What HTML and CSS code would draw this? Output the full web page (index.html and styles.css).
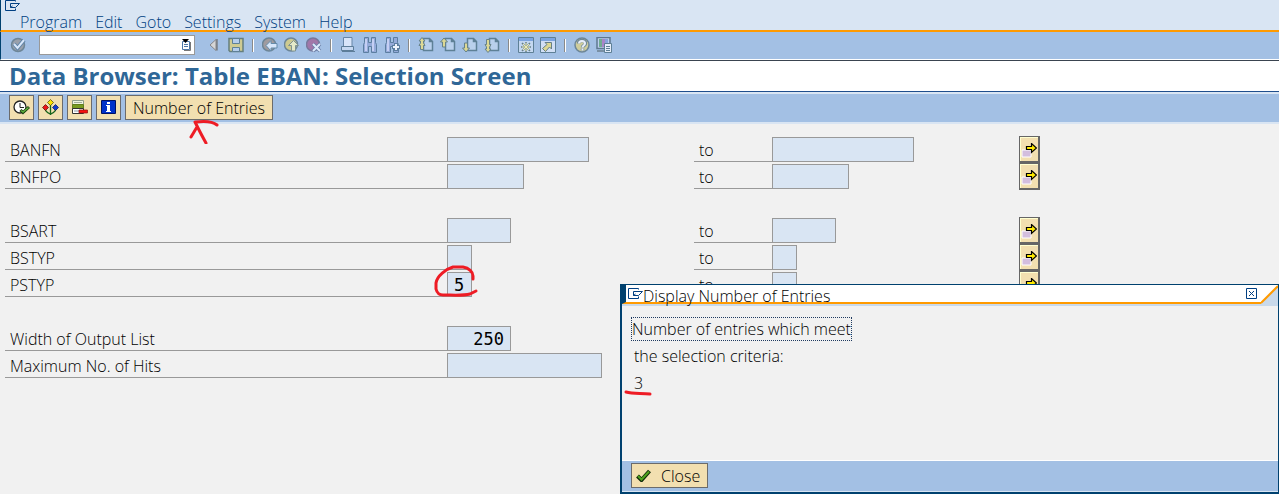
FILE: index.html
```
<!DOCTYPE html>
<html lang="en">
<head>
    <meta charset="UTF-8">
    <title>Data Browser: Table EBAN: Selection Screen</title>
    <link rel="stylesheet" href="styles.css">
</head>
<body>

    <!-- Shared icons -->
    <svg class="sprite" aria-hidden="true">
        <symbol id="i-session" viewBox="0 0 15 11">
            <path d="M10.500 1.500V.5h-10v10h10V8.500M14.500 3.500h-9v4h5zM5.500 7.500l2-1.500" fill="none" stroke="#003f82"/>
        </symbol>
        <symbol id="i-page" viewBox="0 0 16 16">
            <path d="M5.500 1.500h6l3 3v9h-9zM11.500 1.500v3h3" fill="#b9d0ec" stroke="#5e8096" stroke-width="1.500"/>
        </symbol>
        <symbol id="i-more" viewBox="0 0 16 16">
            <path d="M1 7h9v7H1z" fill="#d3bede" stroke="#fff"/>
            <path d="M6 5h4V3h1v1" fill="#9badd0"/>
            <path d="M5.500 3.500h5v-3l5 4.500-5 4.500v-3h-5z" fill="#ffea00" stroke="#000" stroke-width="1.200"/>
        </symbol>
    </svg>

    <!-- Menu -->
    <header class="menubar">
        <svg class="session" width="15" height="11"><use href="#i-session"/></svg>
        <nav class="menu">
            <a href="#">Program</a>
            <a href="#">Edit</a>
            <a href="#">Goto</a>
            <a href="#">Settings</a>
            <a href="#">System</a>
            <a href="#">Help</a>
        </nav>
    </header>

    <!-- Standard toolbar -->
    <div class="toolbar">
        <button type="button" class="tool" aria-label="Enter">
            <svg viewBox="0 0 16 16"><circle cx="8" cy="8" r="6.500" fill="#99a0ab" stroke="#6d8698" stroke-width="1.500"/><path d="M4 7l3.500 4L14 3" fill="none" stroke="#5f84a8" stroke-width="4"/><path d="M4 7l3.500 4L14 3" fill="none" stroke="#d8e7fa" stroke-width="2"/></svg>
        </button>
        <div class="command">
            <input type="text" aria-label="Command">
            <svg width="11" height="12" viewBox="0 0 11 12"><path d="M1.500 2.500h7v8h-7z" fill="#fff" stroke="#4d77a8"/><path d="M3 5.500h4M3 7.500h4" stroke="#4d77a8"/><path d="M9.500 3v8.500H3" fill="none" stroke="#777"/><path d="M1 0h7L4.500 4z" fill="#000"/></svg>
        </div>
        <button type="button" class="tool narrow" aria-label="Close field">
            <svg viewBox="0 0 9 16"><path d="M7 2.500v11L1 8z" fill="#d6d6d6" stroke="#85868a"/><path d="M8 2v11.500" stroke="#655f59"/></svg>
        </button>
        <button type="button" class="tool" aria-label="Save">
            <svg viewBox="0 0 16 16"><path d="M1 1.500h14v13H2l-1-1z" fill="#cfcb92" stroke="#667f7d" stroke-width="1.500"/><path d="M4.500 1.500h7v5h-7zM4.500 10.500h7v4h-7z" fill="#b5cdec" stroke="#5e8096"/></svg>
        </button>
        <span class="sep"></span>
        <button type="button" class="tool" aria-label="Back">
            <svg viewBox="0 0 16 16"><circle cx="7" cy="7.500" r="6.500" fill="#a09b9f" stroke="#6d8698" stroke-width="1.500"/><path d="M4 8.500l5-5v3h6v4.500H9v3z" fill="#d8e7fa" stroke="#658baa"/></svg>
        </button>
        <button type="button" class="tool" aria-label="Exit">
            <svg viewBox="0 0 16 16"><circle cx="7" cy="7.500" r="6.500" fill="#cdca91" stroke="#6d8698" stroke-width="1.500"/><path d="M9.500 3.500l5 5h-3v5.500h-4V8.500h-3z" fill="#e5eac9" stroke="#7f9392"/></svg>
        </button>
        <button type="button" class="tool" aria-label="Cancel">
            <svg viewBox="0 0 16 16"><circle cx="7" cy="7.500" r="6.500" fill="#a177a9" stroke="#78799c" stroke-width="1.500"/><path d="M7 7l7 7M14 7l-7 7" stroke="#667fa8" stroke-width="3.500"/><path d="M7 7l7 7M14 7l-7 7" stroke="#dce8fb" stroke-width="2"/></svg>
        </button>
        <span class="sep"></span>
        <button type="button" class="tool" aria-label="Print">
            <svg viewBox="0 0 16 16"><path d="M3.500.5h8.500v9H3.500z" fill="#d8e5fa" stroke="#6685a7"/><path d="M1.500 9.500h12v4h-12z" fill="#c5d8f2" stroke="#5d7d99"/><path d="M2 14.500h13" stroke="#5d7d99"/></svg>
        </button>
        <button type="button" class="tool" aria-label="Find">
            <svg viewBox="0 0 16 16"><path d="M2.500.5h4v5h3v-5h4v5l1 2v8h-5v-6h-3v6h-5v-8l1-2z" fill="#94aad9" stroke="#5c7ea0"/><path d="M4 2v12M11 2v12" stroke="#c5cff3" stroke-width="2"/></svg>
        </button>
        <button type="button" class="tool" aria-label="Find next">
            <svg viewBox="0 0 16 16"><path d="M2.500.5h4v5h3v-5h4v5l1 2v8h-5v-6h-3v6h-5v-8l1-2z" fill="#94aad9" stroke="#5c7ea0"/><path d="M4 2v12" stroke="#c5cff3" stroke-width="2"/><path d="M12 6v8M8 10h8" stroke="#5c7ea0" stroke-width="4"/><path d="M12 7v6M9 10h6" stroke="#edf3fc" stroke-width="2"/></svg>
        </button>
        <span class="sep"></span>
        <button type="button" class="tool" aria-label="First page">
            <svg viewBox="0 0 16 16"><use href="#i-page"/><path d="M4 .5L7 4H5.500v2L7 8.500H5.500v4h-3v-4H1L2.500 6V4H1z" fill="#dcd894" stroke="#67828a"/></svg>
        </button>
        <button type="button" class="tool" aria-label="Previous page">
            <svg viewBox="0 0 16 16"><use href="#i-page"/><path d="M4 1l3.500 4H5.500v5h-3V5h-2z" fill="#dcd894" stroke="#67828a"/></svg>
        </button>
        <button type="button" class="tool" aria-label="Next page">
            <svg viewBox="0 0 16 16"><use href="#i-page"/><path d="M4 15l3.500-4H5.500V6h-3v5h-2z" fill="#dcd894" stroke="#67828a"/></svg>
        </button>
        <button type="button" class="tool" aria-label="Last page">
            <svg viewBox="0 0 16 16"><use href="#i-page"/><path d="M4 15.500L7 12H5.500v-2L7 7.500H5.500v-5h-3v5H1L2.500 10v2H1z" fill="#dcd894" stroke="#67828a"/></svg>
        </button>
        <span class="sep"></span>
        <button type="button" class="tool" aria-label="New session">
            <svg viewBox="0 0 16 16"><path d="M.5.5h15v15H.5z" fill="#c4d8f1" stroke="#5e8096"/><path d="M1 1h14v3H1z" fill="#7da5df"/><path d="M8 5v10M3 10h10M4 6l8 8M12 6l-8 8" stroke="#677f87" stroke-width="1.500"/><path d="M8 6v8M4 10h8M5 7l6 6M11 7l-6 6" stroke="#f1edae"/></svg>
        </button>
        <button type="button" class="tool" aria-label="Create shortcut">
            <svg viewBox="0 0 16 16"><path d="M.5.500h15v15H.5z" fill="#d1dff5" stroke="#5e8096"/><path d="M1 1h14v3H1z" fill="#7da5df"/><path d="M5 5.500h6.500V12l-2-2-4 4.500-3-3 4.500-4z" fill="#dcd894" stroke="#677f87"/></svg>
        </button>
        <span class="sep"></span>
        <button type="button" class="tool" aria-label="Help">
            <svg viewBox="0 0 16 16"><circle cx="8" cy="8" r="7" fill="#cfcd9c" stroke="#6d8698" stroke-width="1.500"/><path d="M4.500 6.500c0-4 7-4 7 0 0 2-3 2-3 4M8.500 11.500v2" fill="none" stroke="#728a96" stroke-width="3.500"/><path d="M5 6.500c0-3.500 6-3.500 6 0 0 2-2.500 2-2.500 4M8.500 11.500v2" fill="none" stroke="#e8eefa" stroke-width="2"/></svg>
        </button>
        <button type="button" class="tool" aria-label="Customize layout">
            <svg viewBox="0 0 16 16"><path d="M1 .5h13v11H1z" fill="#bccfee" stroke="#5e7890" stroke-width="1.500"/><path d="M3 2h3v8H3z" fill="#70ac92"/><path d="M6 2h3v8H6z" fill="#a886c9"/><path d="M9 2h3v5H9z" fill="#87a4dd"/><path d="M1 14h8" stroke="#7990a5" stroke-width="2"/><path d="M8.500 6.500h7v9h-7z" fill="#e5edfa" stroke="#5e8096"/><path d="M10 9.500h4M10 11.500h4M10 13.500h4" stroke="#5e8096"/></svg>
        </button>
    </div>

    <h1 class="title">Data Browser: Table EBAN: Selection Screen</h1>

    <!-- Application toolbar -->
    <div class="appbar">
        <button type="button" class="btn icon" aria-label="Execute">
            <svg viewBox="0 0 17 17"><circle cx="7" cy="8" r="6" fill="#fff" stroke="#222" stroke-width="1.300"/><path d="M7 4v4.500h4" fill="none" stroke="#222"/><path d="M7.500 11l2.500 2.500L16 8" fill="none" stroke="#173d0c" stroke-width="3"/><path d="M8 11.500l2 1.500L15.500 8.500" fill="none" stroke="#5eb03c" stroke-width="1.500"/></svg>
        </button>
        <button type="button" class="btn icon" aria-label="Get variant">
            <svg viewBox="0 0 17 17"><path d="M8.500 6v10M3 9c0 4 3 5 5.500 6M14 9c0 4-3 5-5.500 6" fill="none" stroke="#18651d" stroke-width="1.300"/><path d="M8.500.5l3 3-3 3-3-3z" fill="#ffe100" stroke="#44400a" stroke-width=".7"/><path d="M3.500 5.500l3 3-3 3-3-3z" fill="#ed1515" stroke="#450c0c" stroke-width=".7"/><path d="M13.500 5.500l3 3-3 3-3-3z" fill="#1238d0" stroke="#081849" stroke-width=".7"/></svg>
        </button>
        <button type="button" class="btn icon" aria-label="Dynamic selections">
            <svg viewBox="0 0 17 17"><path d="M1.500 1.500h11v4h-11z" fill="#eef4df" stroke="#8e9c8a"/><path d="M3 3.500h8" stroke="#a3ad9c"/><path d="M1.500 5.500h11v4h-11z" fill="#779b20" stroke="#607d1c"/><path d="M1.500 9.500h11v5h-11z" fill="#fff" stroke="#333"/><path d="M3 12h5" stroke="#8794a3"/><path d="M8 11h8.500v3H8z" fill="#fa1010" stroke="#8b1010" stroke-width=".7"/></svg>
        </button>
        <button type="button" class="btn icon" aria-label="Information">
            <svg viewBox="0 0 17 17"><path d="M1.500 1.500h14v13h-14z" fill="#0031ca" stroke="#001163"/><path d="M7 3h3v2H7zM6 6h4v6h1v1H6v-1h1V7H6z" fill="#fff"/></svg>
        </button>
        <button type="button" class="btn entries">Number of Entries</button>
        <svg class="mark arrow-mark" width="30" height="25" viewBox="0 0 30 25"><path d="M7 3c8-1 16-1 21 3M2 18l6-10M6 3c3 6 7 14 11 21"/></svg>
    </div>

    <!-- Selection fields -->
    <form class="selection">
        <div class="row">
            <label for="banfn">BANFN</label>
            <input type="text" id="banfn" class="w-142">
            <label for="banfn-to">to</label>
            <input type="text" id="banfn-to" class="w-142">
            <button type="button" class="more" aria-label="Multiple selection for BANFN"><svg width="16" height="16"><use href="#i-more"/></svg></button>
        </div>
        <div class="row">
            <label for="bnfpo">BNFPO</label>
            <input type="text" id="bnfpo" class="w-77">
            <label for="bnfpo-to">to</label>
            <input type="text" id="bnfpo-to" class="w-77">
            <button type="button" class="more" aria-label="Multiple selection for BNFPO"><svg width="16" height="16"><use href="#i-more"/></svg></button>
        </div>
        <div class="row group">
            <label for="bsart">BSART</label>
            <input type="text" id="bsart" class="w-64">
            <label for="bsart-to">to</label>
            <input type="text" id="bsart-to" class="w-64">
            <button type="button" class="more" aria-label="Multiple selection for BSART"><svg width="16" height="16"><use href="#i-more"/></svg></button>
        </div>
        <div class="row">
            <label for="bstyp">BSTYP</label>
            <input type="text" id="bstyp" class="w-25">
            <label for="bstyp-to">to</label>
            <input type="text" id="bstyp-to" class="w-25">
            <button type="button" class="more" aria-label="Multiple selection for BSTYP"><svg width="16" height="16"><use href="#i-more"/></svg></button>
        </div>
        <div class="row">
            <label for="pstyp">PSTYP</label>
            <input type="text" id="pstyp" class="w-25" value="5">
            <label for="pstyp-to">to</label>
            <input type="text" id="pstyp-to" class="w-25">
            <button type="button" class="more" aria-label="Multiple selection for PSTYP"><svg width="16" height="16"><use href="#i-more"/></svg></button>
            <svg class="mark circle-mark" width="46" height="34" viewBox="0 0 46 34"><path d="M40 15v-3c0-4-4-8-10-9H20C13 5 4 12 3 19v6c1 4 3 6 7 6 9 0 20 1 27-1l6-3"/></svg>
        </div>
        <div class="row group">
            <label for="width">Width of Output List</label>
            <input type="text" id="width" class="w-64 number" value="250">
        </div>
        <div class="row">
            <label for="hits">Maximum No. of Hits</label>
            <input type="text" id="hits" class="w-155">
        </div>
    </form>

    <!-- Result popup -->
    <section class="dialog" role="dialog" aria-labelledby="dialog-title">
        <div class="dialog-head">
            <svg width="15" height="11"><use href="#i-session"/></svg>
            <h2 id="dialog-title">Display Number of Entries</h2>
            <button type="button" class="dialog-x" aria-label="Close window">
                <svg width="11" height="11" viewBox="0 0 11 11"><path d="M.5.500h10v10H.5zM3 3l5 5M8 3L3 8" fill="none" stroke="#003f82"/></svg>
            </button>
            <svg class="corner" width="17" height="21" viewBox="0 0 17 21"><path d="M0 18L17 1v20H0z" fill="#c9d9ea"/><path d="M0 18L17 1" stroke="#ff9a00" stroke-width="2"/></svg>
        </div>
        <div class="dialog-body">
            <p><span class="focused">Number of entries which meet</span></p>
            <p>the selection criteria:</p>
            <p class="count">3<svg class="mark line-mark" width="28" height="6" viewBox="0 0 28 6"><path d="M2 2c7 2 15 1 24 2"/></svg></p>
        </div>
        <div class="dialog-foot">
            <button type="button" class="btn close">
                <svg width="15" height="13" viewBox="0 0 15 13"><path d="M1.500 7l4 4L13.500 2" fill="none" stroke="#10290a" stroke-width="4"/><path d="M2 7l3.500 3.500L13 2.500" fill="none" stroke="#4fa31d" stroke-width="2"/></svg>
                Close
            </button>
        </div>
    </section>

</body>
</html>
```
FILE: styles.css
```
* {
    box-sizing: border-box;
}

body {
    margin: 0;
    min-height: 100vh;
    position: relative;
    background-color: #f1f1f1;
    color: #000;
    font-family: "Open Sans", "Noto Sans", sans-serif;
    font-size: 16px;
    font-weight: 300;
    line-height: 20px;
}

button,
input {
    font: inherit;
    color: inherit;
    margin: 0;
    padding: 0;
    border-radius: 0;
}

button {
    cursor: pointer;
}

svg {
    display: block;
    flex: none;
}

.sprite {
    position: absolute;
    width: 0;
    height: 0;
}

/* Menu */
.menubar {
    height: 32px;
    padding-left: 4px;
    background-color: #d9e5f3;
    border-left: 1px solid #00416f;
    border-bottom: 2px solid #ff9a00;
}

.menu {
    display: flex;
    gap: 13px;
    padding: 1px 0 0 15px;
}

.menu a {
    color: #003f82;
    text-decoration: none;
}

/* Standard toolbar */
.toolbar {
    display: flex;
    align-items: center;
    gap: 6px;
    height: 28px;
    padding: 0 0 1px 9px;
    background-color: #a3c0e4;
    border-left: 1px solid #00416f;
    border-bottom: 1px solid #fff;
}

.tool {
    width: 16px;
    height: 16px;
    background: none;
    border: none;
}

.tool.narrow {
    width: 9px;
    margin: 0 4px 0 8px;
}

.command {
    display: flex;
    align-items: center;
    width: 156px;
    height: 20px;
    margin-left: 7px;
    padding-right: 2px;
    background-color: #fff;
    border: 1px solid #999;
}

.command input {
    flex: 1;
    min-width: 0;
    border: none;
    background: none;
    outline: none;
}

.sep {
    width: 2px;
    height: 13px;
    margin: 0 2px;
    background-color: #fff;
    border-left: 1px solid #8a8a8a;
}

.title {
    margin: 0;
    padding: 1px 9px 0;
    height: 32px;
    background-color: #fff;
    border-top: 1px solid #3a4450;
    border-bottom: 1px solid #1f4e8c;
    color: #2f6797;
    font-size: 24px;
    font-weight: 700;
    line-height: 28px;
}

/* Application toolbar */
.appbar {
    position: relative;
    display: flex;
    align-items: flex-start;
    gap: 4px;
    height: 32px;
    padding: 1px 0 0 9px;
    background-color: #a3c0e4;
    border-top: 2px solid #d9e5f3;
    border-bottom: 2px solid #d9e5f3;
}

.btn {
    display: flex;
    align-items: center;
    justify-content: center;
    height: 25px;
    background-color: #f2dfb0;
    border: 1px solid #6b6b6b;
}

.btn.icon {
    width: 25px;
}

.btn.icon svg {
    width: 17px;
    height: 17px;
}

.entries {
    padding: 0 7px;
}

/* Selection fields */
.selection {
    padding: 12px 5px;
}

.row {
    position: relative;
    display: grid;
    grid-template-columns: 442px 247px 78px 247px 21px;
    height: 27px;
}

.group {
    margin-top: 27px;
}

.row label {
    height: 26px;
    padding: 4px 5px 0;
    border-bottom: 1px solid #999;
}

.row input {
    height: 25px;
    margin-top: 1px;
    padding: 0 6px;
    background-color: #d9e5f3;
    border: 1px solid #999;
    font-family: "DejaVu Sans Mono", monospace;
    font-size: 17px;
    font-weight: 400;
}

.row .number {
    text-align: right;
}

.w-142 { width: 142px; }
.w-155 { width: 155px; }
.w-77 { width: 77px; }
.w-64 { width: 64px; }
.w-25 { width: 25px; }

.more {
    display: flex;
    justify-content: center;
    padding-top: 6px;
    background-color: #f2dfb0;
    border: 1px solid #666;
    border-right-width: 2px;
    border-bottom-width: 2px;
    box-shadow: inset 1px 1px #ffffd0;
}

/* Red pen marks */
.mark {
    position: absolute;
    fill: none;
    stroke: #ee1c25;
    stroke-width: 3;
    stroke-linecap: round;
    stroke-linejoin: round;
}

.arrow-mark {
    left: 189px;
    top: 25px;
    z-index: 1;
}

.circle-mark {
    left: 428px;
    top: -7px;
}

.line-mark {
    left: -8px;
    top: 17px;
}

/* Result popup */
.dialog {
    position: absolute;
    right: 0;
    top: 284px;
    width: 659px;
    background-color: #f1f1f1;
    border: solid #00416f;
    border-width: 1px 1px 2px 2px;
}

.dialog-head {
    position: relative;
    display: flex;
    align-items: flex-start;
    height: 19px;
    padding: 3px 21px 0 2px;
    background-color: #fff;
    border-left: 4px solid #00416f;
    border-bottom: 2px solid #ff9a00;
    box-shadow: 0 2px #c9d9ea;
}

.dialog-head h2 {
    margin: 0;
    font-size: 16px;
    font-weight: 300;
    line-height: 16px;
}

.dialog-x {
    margin-left: auto;
    background: none;
    border: none;
}

.corner {
    position: absolute;
    right: 0;
    top: 0;
}

.dialog-body {
    height: 157px;
    padding: 15px 10px 0;
    border-bottom: 1px solid #fff;
}

.dialog-body p {
    margin: 0 0 7px;
    padding-left: 2px;
}

.focused {
    margin-left: -2px;
    outline: 1px dotted #1f3a60;
}

.dialog-body .count {
    position: relative;
}

.dialog-foot {
    padding: 2px 9px 3px;
    background-color: #a3c0e4;
    border-bottom: 1px solid #d9e5f3;
}

.close {
    gap: 10px;
    padding: 0 7px 0 4px;
}
```
